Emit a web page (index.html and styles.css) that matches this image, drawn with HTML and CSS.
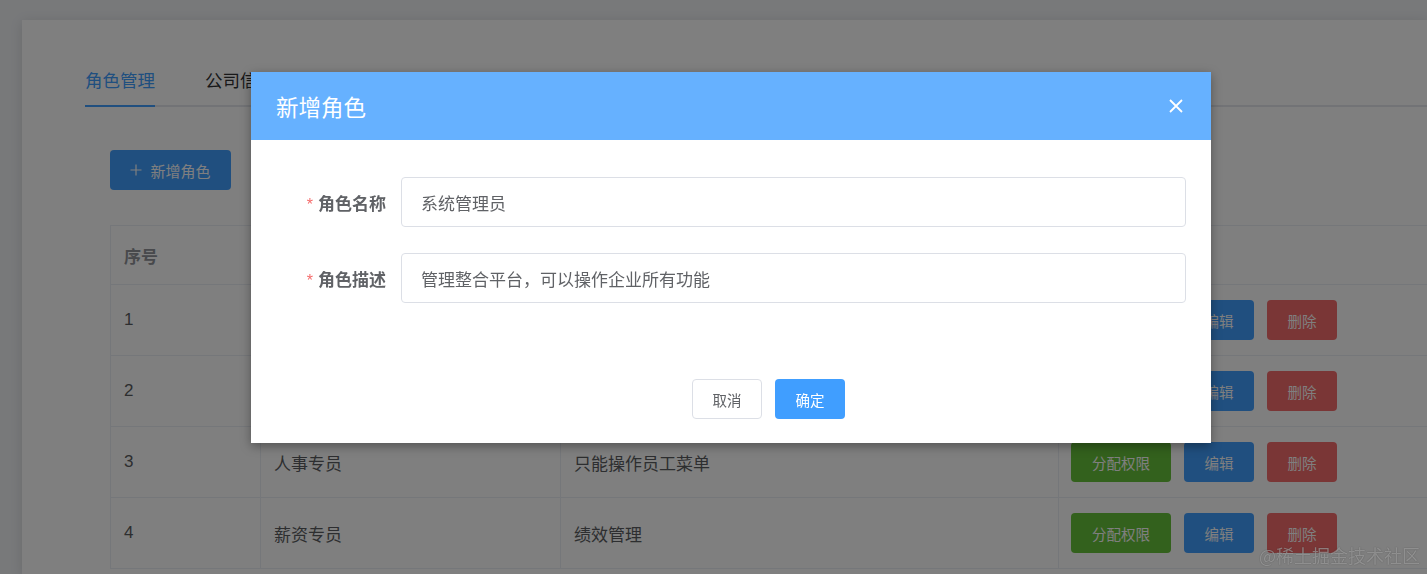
FILE: index.html
```html
<!DOCTYPE html>
<html lang="zh-CN">
<head>
<meta charset="utf-8">
<title>角色管理</title>
<link rel="stylesheet" href="styles.css">
</head>
<body>
<div class="page">
  <div class="card">
    <div class="tabs">
      <div class="tab active">角色管理</div>
      <div class="tab">公司信息</div>
    </div>
    <div class="tab-pane">
      <button class="btn btn-primary btn-add">
        <svg class="plus" viewBox="0 0 12 12" width="12" height="12"><path d="M6 0.5V11.5M0.5 6H11.5" stroke="currentColor" stroke-width="1.2" fill="none"/></svg>
        <span>新增角色</span>
      </button>
      <div class="table">
        <div class="tr thead">
          <div class="td c1">序号</div>
          <div class="td c2">角色名称</div>
          <div class="td c3">角色描述</div>
          <div class="td c4">操作</div>
        </div>
        <div class="tr">
          <div class="td c1">1</div>
          <div class="td c2">系统管理员</div>
          <div class="td c3">管理整合平台，可以操作企业所有功能</div>
          <div class="td c4 ops"><button class="btn btn-success">分配权限</button><button class="btn btn-edit">编辑</button><button class="btn btn-danger">删除</button></div>
        </div>
        <div class="tr">
          <div class="td c1">2</div>
          <div class="td c2">财务人员</div>
          <div class="td c3">财务管理</div>
          <div class="td c4 ops"><button class="btn btn-success">分配权限</button><button class="btn btn-edit">编辑</button><button class="btn btn-danger">删除</button></div>
        </div>
        <div class="tr">
          <div class="td c1">3</div>
          <div class="td c2">人事专员</div>
          <div class="td c3">只能操作员工菜单</div>
          <div class="td c4 ops"><button class="btn btn-success">分配权限</button><button class="btn btn-edit">编辑</button><button class="btn btn-danger">删除</button></div>
        </div>
        <div class="tr">
          <div class="td c1">4</div>
          <div class="td c2">薪资专员</div>
          <div class="td c3">绩效管理</div>
          <div class="td c4 ops"><button class="btn btn-success">分配权限</button><button class="btn btn-edit">编辑</button><button class="btn btn-danger">删除</button></div>
        </div>
      </div>
    </div>
  </div>
</div>

<div class="mask"></div>

<div class="dialog">
  <div class="dialog-header">
    <span class="dialog-title">新增角色</span>
    <svg class="close" viewBox="0 0 14 14" width="14" height="14"><path d="M1 1L13 13M13 1L1 13" stroke="#fff" stroke-width="1.8" fill="none"/></svg>
  </div>
  <div class="dialog-body">
    <div class="form-item">
      <label class="form-label"><span class="req">*</span>角色名称</label>
      <div class="input">系统管理员</div>
    </div>
    <div class="form-item">
      <label class="form-label"><span class="req">*</span>角色描述</label>
      <div class="input">管理整合平台，可以操作企业所有功能</div>
    </div>
  </div>
  <div class="dialog-footer">
    <button class="btn btn-default">取消</button>
    <button class="btn btn-confirm">确定</button>
  </div>
</div>

<div class="watermark">@稀土掘金技术社区</div>
</body>
</html>
```

FILE: styles.css
```css
* { box-sizing: border-box; }

html, body {
  margin: 0;
  padding: 0;
  width: 1427px;
  height: 574px;
  overflow: hidden;
  font-family: "Liberation Sans", "Noto Sans CJK SC", sans-serif;
  background: #f0f2f5;
}

.page {
  padding: 20px 0 0 22px;
  height: 574px;
  overflow: hidden;
}

.card {
  width: 1405px;
  height: 554px;
  background: #fff;
  box-shadow: 0 2px 12px rgba(0,0,0,0.12);
  padding: 40px 0 0 63px;
  overflow: hidden;
}

.tabs {
  display: flex;
  border-bottom: 2px solid #e4e7ed;
}

.tab {
  position: relative;
  font-size: 17.5px;
  line-height: 42px;
  padding-bottom: 3px;
  color: #303133;
  margin-right: 50px;
}

.tab.active { color: #409eff; }

.tab.active::after {
  content: "";
  position: absolute;
  left: 0;
  right: 0;
  bottom: -2px;
  height: 2px;
  background: #409eff;
}

.tab-pane {
  padding: 43px 0 0 25px;
}

.btn {
  border: none;
  border-radius: 4px;
  height: 40px;
  padding: 0;
  font-family: "Liberation Sans", "Noto Sans CJK SC", sans-serif;
  font-size: 15px;
  color: #fff;
  display: inline-flex;
  align-items: center;
  justify-content: center;
  cursor: pointer;
}

.btn-primary { background: #409eff; }

.btn-add {
  width: 121px;
  gap: 8px;
}

.plus { display: block; }

.table {
  margin-top: 35px;
  width: 1400px;
  border-left: 1px solid #ebeef5;
  border-top: 1px solid #ebeef5;
}

.tr {
  display: flex;
  height: 71px;
  border-bottom: 1px solid #ebeef5;
}

.tr.thead {
  height: 59px;
  font-weight: bold;
}

.td {
  display: flex;
  align-items: center;
  padding-left: 13px;
  border-right: 1px solid #ebeef5;
  font-size: 17px;
  color: #5a5c60;
}

.thead .td { color: #909399; }

.c1 { width: 150px; }
.c2 { width: 300px; }
.c3 { width: 498px; }
.c4 { flex: 1; border-right: none; padding-left: 12px; }

.ops { gap: 13px; }

.ops .btn { font-size: 14.5px; }

.btn-success { width: 100px; background: #67c23a; }
.btn-edit { width: 70px; background: #409eff; }
.btn-danger { width: 70px; background: #f56c6c; }

.mask {
  position: fixed;
  inset: 0;
  background: rgba(0,0,0,0.5);
}

.dialog {
  position: absolute;
  left: 251px;
  top: 72px;
  width: 960px;
  background: #fff;
  box-shadow: 0 3px 10px rgba(0,0,0,0.35);
}

.dialog-header {
  height: 68px;
  background: #66b1ff;
  display: flex;
  align-items: center;
  justify-content: space-between;
  padding: 0 28px 0 25px;
}

.dialog-title {
  color: #fff;
  font-size: 22.5px;
}

.close { display: block; }

.dialog-body {
  padding: 37px 25px 76px 0;
  display: flex;
  flex-direction: column;
  gap: 26px;
}

.form-item {
  display: flex;
  align-items: center;
}

.form-label {
  width: 150px;
  padding-right: 15px;
  text-align: right;
  font-size: 17px;
  font-weight: bold;
  color: #606266;
}

.req {
  color: #f56c6c;
  font-weight: normal;
  font-size: 16px;
  margin-right: 5px;
}

.input {
  flex: 1;
  height: 50px;
  border: 1px solid #dcdfe6;
  border-radius: 4px;
  padding-left: 19px;
  display: flex;
  align-items: center;
  font-size: 17px;
  color: #606266;
}

.dialog-footer {
  display: flex;
  gap: 13px;
  padding: 0 0 24px 441px;
}

.btn-default {
  width: 70px;
  background: #fff;
  border: 1px solid #dcdfe6;
  color: #606266;
  font-size: 14.5px;
}

.btn-confirm {
  width: 70px;
  background: #409eff;
  color: #fff;
  font-size: 14.5px;
}

.watermark {
  position: absolute;
  right: 7px;
  bottom: 6px;
  font-size: 18px;
  color: rgba(200,200,200,0.55);
  text-shadow: 0 0 1px rgba(0,0,0,0.5);
  font-family: "Noto Sans CJK SC", sans-serif;
}
```
